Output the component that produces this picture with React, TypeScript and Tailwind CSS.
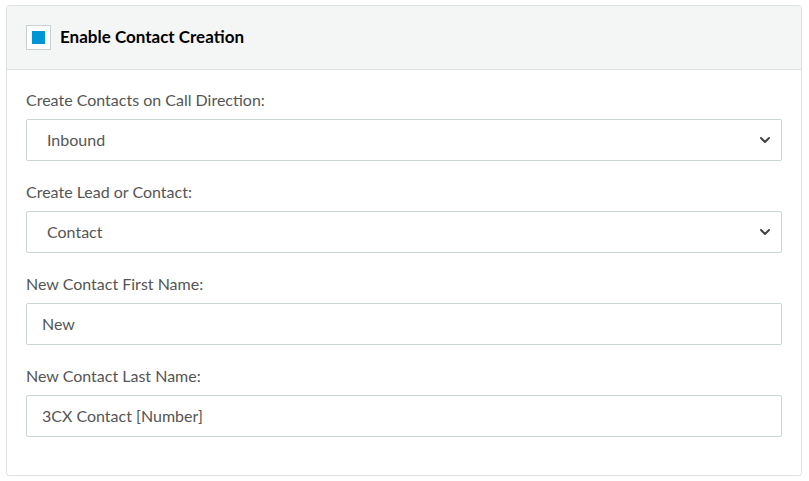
import { ChevronDown } from "lucide-react";

const FIELDS = [
  { label: "Create Contacts on Call Direction:", value: "Inbound", select: true },
  { label: "Create Lead or Contact:", value: "Contact", select: true },
  { label: "New Contact First Name:", value: "New", select: false },
  { label: "New Contact Last Name:", value: "3CX Contact [Number]", select: false },
];

export default function App() {
  return (
    <div className="min-h-screen bg-white pl-[6px] pr-[7px] pt-[5px] font-['Lato',sans-serif]">
      <div className="w-[796px] rounded-[3px] border border-[#dde3e3] bg-white">
        <div className="flex h-[64px] items-center gap-[9px] border-b border-[#dde3e3] bg-[#f4f6f6] pb-[1px] pl-[19px]">
          <div className="flex h-[25px] w-[25px] items-center justify-center border border-[#c9d2d2] bg-white">
            <div className="h-[13px] w-[13px] bg-[#0096d6]" />
          </div>
          <span className="text-[17px] font-bold text-black">Enable Contact Creation</span>
        </div>

        <div className="flex flex-col gap-[20px] px-[19px] pb-[38px] pt-[19px]">
          {FIELDS.map((f) => (
            <div key={f.label}>
              <div className="mb-[8px] h-[22px] text-[16px] leading-[22px] text-[#555]">
                {f.label}
              </div>
              <div className="flex h-[42px] items-center justify-between rounded-[2px] border border-[#ccd5d5] bg-white pr-[8px]">
                <span
                  className={
                    "text-[16px] text-[#555] " + (f.select ? "pl-[20px]" : "pl-[15px]")
                  }
                >
                  {f.value}
                </span>
                {f.select && (
                  <ChevronDown size={16} strokeWidth={3} className="text-[#444]" />
                )}
              </div>
            </div>
          ))}
        </div>
      </div>
    </div>
  );
}
